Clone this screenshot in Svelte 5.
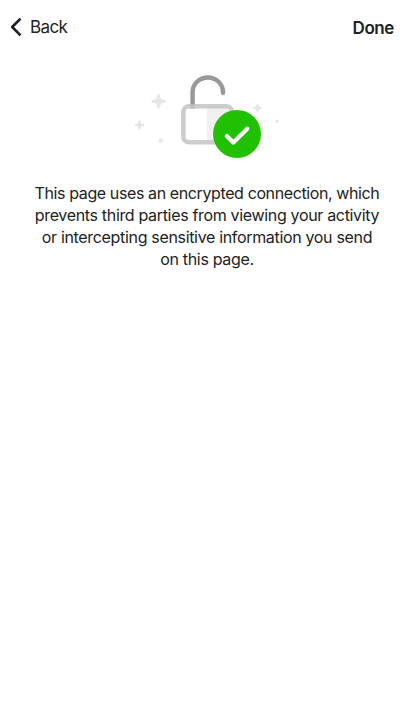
<script>
  const lines = [
    { text: 'This page uses an encrypted connection, which', spacing: -0.39 },
    { text: 'prevents third parties from viewing your activity', spacing: -0.33 },
    { text: 'or intercepting sensitive information you send', spacing: -0.33 },
    { text: 'on this page.', spacing: -0.33 }
  ];
</script>

<main>
  <header>
    <button class="back" type="button">
      <svg width="12" height="20" viewBox="0 0 12 20" aria-hidden="true">
        <path d="M10.5 1.6 2.2 10l8.3 8.4" fill="none" stroke="#222" stroke-width="2.7" stroke-linejoin="round" />
      </svg>
      <span>Back</span>
    </button>
    <button class="done" type="button">Done</button>
  </header>

  <svg class="hero" width="160" height="96" viewBox="127 68 160 96" aria-hidden="true">
    <g fill="#e6e6e6">
      <path d="M158.5 94.3q1.5 0 1.6 2 .2 3.3 3 3.5 2.6 0 2.6 1.6t-2.6 1.6q-2.8.2-3 3.5-.1 2-1.6 2t-1.6-2q-.2-3.3-3-3.5-2.6 0-2.6-1.6t2.6-1.6q2.8-.2 3-3.5.1-2 1.6-2Z" />
      <path d="M139.5 120.3q.9 0 1 1.5.3 2 2.2 2.3 1.6.1 1.6 1t-1.6 1q-1.9.3-2.2 2.3-.1 1.5-1 1.5t-1-1.5q-.3-2-2.2-2.3-1.6-.1-1.6-1t1.6-1q1.9-.3 2.2-2.3.1-1.5 1-1.5Z" />
      <path d="M257.5 103.5q.9 0 1 1.4.3 1.7 2 2 1.6.1 1.6 1.1t-1.6 1.1q-1.7.3-2 2-.1 1.4-1 1.4t-1-1.4q-.3-1.7-2-2-1.6-.1-1.6-1.1t1.6-1.1q1.7-.3 2-2 .1-1.4 1-1.4Z" />
      <circle cx="160.7" cy="140.6" r="2.2" />
      <circle cx="277.2" cy="121.3" r="1.7" />
    </g>
    <path d="M207 106h24v36h-24z" fill="#f0f0f0" />
    <rect x="183.4" y="106.3" width="48.4" height="36" rx="5.5" fill="none" stroke="#ccc" stroke-width="4.5" />
    <path d="M190.4 104h4.4v4.8h-4.4z" fill="#bfbfbf" />
    <path d="M192.6 104.2V92a15.2 14.5 0 0 1 30.4 0" fill="none" stroke="#999" stroke-width="4.4" />
    <path d="M223 91.5v1.6" fill="none" stroke="#999" stroke-width="4.4" stroke-linecap="round" />
    <circle cx="237" cy="134" r="24" fill="#21c000" />
    <path d="m226.8 136.1 6.5 6.4 14-13.8" fill="none" stroke="#fff" stroke-width="4.2" stroke-linecap="round" stroke-linejoin="round" />
  </svg>

  <p>
    {#each lines as line}
      <span style:letter-spacing="{line.spacing}px">{line.text}</span>
    {/each}
  </p>
</main>

<style>
  :global(body) {
    background: #fff;
  }
  main {
    min-height: 715px;
    display: flex;
    flex-direction: column;
    align-items: center;
    color: #222;
    font-family: Inter, "Liberation Sans", sans-serif;
  }
  header {
    width: 100%;
    height: 56px;
    box-sizing: border-box;
    padding: 0 20px 2px 10px;
    display: flex;
    align-items: center;
    justify-content: space-between;
  }
  button {
    border: 0;
    padding: 0;
    background: none;
    color: inherit;
    font: 400 17px/22px Inter, "Liberation Sans", sans-serif;
  }
  .back {
    display: flex;
    align-items: center;
    gap: 8px;
    letter-spacing: -0.6px;
  }
  .done {
    font-weight: 600;
    letter-spacing: -0.4px;
    padding-top: 1px;
  }
  .hero {
    margin-top: 12px;
    display: block;
  }
  p {
    margin: 18px 0 0;
    display: flex;
    flex-direction: column;
    align-items: center;
    font-size: 16px;
    line-height: 22px;
    white-space: nowrap;
  }
</style>
